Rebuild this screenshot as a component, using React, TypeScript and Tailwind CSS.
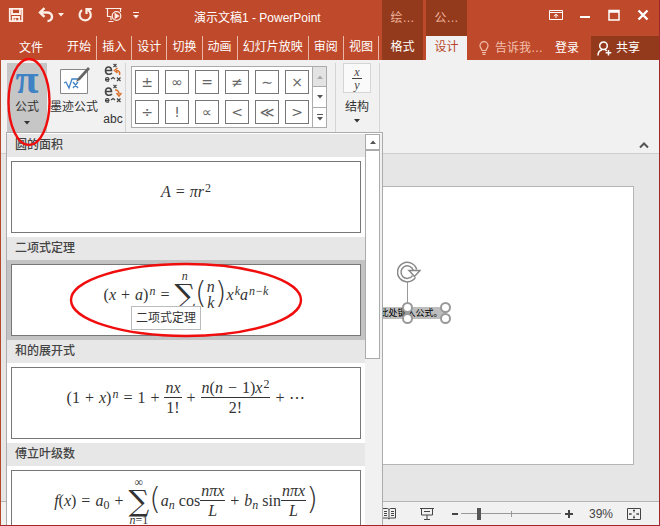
import type { ReactNode } from 'react'
import { clsx } from 'clsx'

const tabs = ['开始', '插入', '设计', '切换', '动画', '幻灯片放映', '审阅', '视图']
const symbols = ['±', '∞', '=', '≠', '∼', '×', '÷', '!', '∝', '<', '≪', '>']

function Caret({ className }: { className?: string }) {
  return (
    <svg viewBox="0 0 6 4" className={clsx('h-1 w-1.5', className)} fill="currentColor">
      <path d="M0 0h6L3 3.5z" />
    </svg>
  )
}

function QuickAccess() {
  return (
    <div className="flex items-center pb-1.5 pl-2 text-[#fdeee8]">
      <button aria-label="保存">
        <svg width="16" height="16" viewBox="0 0 16 16" fill="none" stroke="currentColor" strokeWidth="1.8">
          <path d="M1.8 1.8h12.4v12.4H1.8zM4 2v5h8V2M4.8 14v-4h6.4v4M7.3 11.5V14" />
        </svg>
      </button>
      <button aria-label="撤消" className="ml-3.5">
        <svg width="16" height="16" viewBox="0 0 16 16" fill="none" stroke="currentColor" strokeWidth="2.4">
          <path d="M6.5 1.2 2 5.5l4.5 4.3M2.5 5.5H9c3 0 5 1.6 5 4.2S12 14 9.5 14" />
        </svg>
      </button>
      <Caret className="ml-1" />
      <button aria-label="恢复" className="ml-3.5">
        <svg width="15" height="16" viewBox="0 0 15 16" fill="none" stroke="currentColor" strokeWidth="2.2">
          <path d="M4 3.2A5.6 5.6 0 1 0 10 3M8.5 7V2h5.3" />
        </svg>
      </button>
      <button aria-label="从头开始" className="ml-3">
        <svg width="18" height="16" viewBox="0 0 18 16" fill="none" stroke="currentColor" strokeWidth="1.2">
          <path d="M.5 1.5h16M2.5 2v7.5h4M6 10v3M3.5 14.5h5M15.5 2v3" />
          <circle cx="11.5" cy="9" r="4.3" />
          <path d="M10.2 6.8v4.4l3.4-2.2z" fill="currentColor" />
        </svg>
      </button>
      <button aria-label="自定义快速访问工具栏" className="ml-2.5 flex flex-col items-center gap-0.5">
        <span className="h-px w-1.5 bg-current" />
        <Caret />
      </button>
    </div>
  )
}

function ContextTab({ group, label, active }: { group: string; label: string; active?: boolean }) {
  return (
    <div className="ml-[3px] flex w-[41px] shrink-0 flex-col bg-[#933a1d]">
      <div className="flex h-9 items-center justify-center text-[#f0b49c]">{group}</div>
      <button className={clsx('h-6 pb-0.5', active ? 'bg-[#f1f1f1] text-[#b7472a]' : 'text-white')}>{label}</button>
    </div>
  )
}

function TitleBar() {
  return (
    <header className="flex h-[60px] shrink-0 bg-[#bf4a2b] text-white">
      <div className="flex w-[379px] shrink-0 flex-col">
        <div className="flex h-9">
          <QuickAccess />
          <h1 className="ml-[55px] pt-2.5 leading-4">演示文稿1 - PowerPoint</h1>
        </div>
        <nav className="flex h-6 items-center">
          <button className="w-[62px]">文件</button>
          {tabs.map((tab) => (
            <button key={tab} className="h-6 flex-auto border-r border-[#eab7a6] pb-0.5">
              {tab}
            </button>
          ))}
        </nav>
      </div>
      <ContextTab group="绘…" label="格式" />
      <ContextTab group="公…" label="设计" active />
      <div className="flex min-w-0 flex-1 flex-col">
        <div className="flex h-9 items-center justify-end gap-[17px] pr-2.5 pb-1.5">
          <button aria-label="功能区显示选项">
            <svg width="14" height="12" viewBox="0 0 14 12" fill="none" stroke="currentColor">
              <path d="M.5 1.5h13v9H.5zM.5 3.5h13M7 9V5.5M4.8 7.3 7 5.2l2.2 2.1" />
            </svg>
          </button>
          <button aria-label="最小化">
            <svg width="11" height="12" viewBox="0 0 11 12" fill="currentColor">
              <path d="M0 7h10v2H0z" />
            </svg>
          </button>
          <button aria-label="最大化">
            <svg width="12" height="12" viewBox="0 0 12 12" fill="none" stroke="currentColor">
              <path d="M1 1.5h10v9.5H1zM1 3h10" strokeWidth="1.5" />
            </svg>
          </button>
          <button aria-label="关闭">
            <svg width="12" height="12" viewBox="0 0 12 12" fill="none" stroke="currentColor" strokeWidth="2.4">
              <path d="m1.5 1.5 9 9M10.5 1.5l-9 9" />
            </svg>
          </button>
        </div>
        <div className="flex h-6 items-center">
          <button className="ml-3 flex items-center gap-1.5 text-[#f2c0ae]">
            <svg width="10" height="14" viewBox="0 0 10 14" fill="none" stroke="currentColor" strokeWidth="1.2">
              <path d="M3 9.5C3 8 1 7 1 4.7a4 4 0 0 1 8 0C9 7 7 8 7 9.5zM3 11.5h4M3.5 13.3h3" />
            </svg>
            告诉我…
          </button>
          <button className="ml-auto">登录</button>
          <button className="ml-3 flex h-6 w-[68px] items-center gap-1 bg-[#933a1d] pl-1.5">
            <svg width="15" height="15" viewBox="0 0 15 15" fill="none" stroke="currentColor" strokeWidth="1.5">
              <circle cx="6.5" cy="4.8" r="3.8" />
              <path d="M1 14.5c0-3.5 1.5-5 4-5.8M8.2 8.6l1.5 1.2M11.5 9v5.5M8.7 11.8h5.6" />
            </svg>
            共享
          </button>
        </div>
      </div>
    </header>
  )
}

function Conversion({ label, up }: { label: string; up?: boolean }) {
  return (
    <button aria-label={label}>
      <svg width="18" height="19" viewBox="0 0 18 19" fill="none" stroke="#444" strokeWidth="1.2">
        <path d="M1 7.5h6.500C7.500 3 1.500 2.500 1.500 7.500c0 4.500 4.500 4.500 6.500 2.500" strokeWidth="1.6" />
        <path d="m9.500 1 3 3m0-3-3 3M1.500 16.500H5c0-2.500-3.500-2.500-3.500 0 0 2 2.500 2 3.500 1M7 16l2-1.500L11 16M13 14.500l3.500 3.500m0-3.500L13 18" />
        <path
          d={up ? 'M15.5 12c1-3-1-4.5-3.5-4.5M13.5 5l-3 2.5 3 2.5' : 'M11 6c2.5 0 4 1 4 4M12.5 9l2.5 3 2.5-3'}
          stroke="#d9702e"
          strokeWidth="1.5"
        />
      </svg>
    </button>
  )
}

function Ribbon() {
  return (
    <section className="flex h-[94px] shrink-0 items-start border-b border-[#cfcfcf] bg-[#f1f1f1] pt-[3px] pl-1.5">
      <button className="relative flex h-[72px] w-10 flex-col items-center bg-[#c6c6c6]">
        <span className="h-9 font-['Liberation_Serif',serif] text-[42px] leading-8 font-bold text-[#3f83c4]">π</span>
        <span className="leading-4">公式</span>
        <Caret className="mt-1.5" />
        <svg className="absolute -top-1 left-0 z-20 h-[88px] w-11 overflow-visible" viewBox="0 0 44 88" fill="none">
          <ellipse cx="22" cy="43" rx="20.5" ry="43" stroke="#f00d0d" strokeWidth="2.4" />
        </svg>
      </button>
      <button className="ml-0.5 flex w-[50px] flex-col items-center whitespace-nowrap">
        <svg width="32" height="36" viewBox="0 0 32 36" fill="none">
          <path d="M2.5 6.5h27v24h-27z" fill="#fff" stroke="#888" />
          <path d="m6 20 2-1 3 6 3-9h8M15 19l5 6m0-6-5 6" stroke="#3f83c4" strokeWidth="1.3" />
          <path d="M20 15 30 4l2 2-10 11-4 2z" fill="#666" />
        </svg>
        <span className="leading-4">墨迹公式</span>
      </button>
      <div className="ml-0.5 flex w-6 flex-col items-center gap-0.5">
        <Conversion label="专业型" up />
        <Conversion label="线性" />
        <button className="pt-1.5">abc</button>
      </div>
      <div className="h-[69px] w-px bg-[#d5d5d5]" />
      <div className="mt-[3px] ml-[5px] flex h-[62px] border border-[#ababab] bg-white">
        <div className="grid grid-cols-6 gap-1.5 p-[3px]">
          {symbols.map((s) => (
            <button
              key={s}
              className="size-6 border border-[#777] font-['DejaVu_Sans',sans-serif] text-sm leading-5 text-[#666]"
            >
              {s}
            </button>
          ))}
        </div>
        <div className="flex w-3.5 flex-col divide-y divide-[#ababab] border-l border-[#ababab] text-[#555]">
          <button aria-label="上一行" className="flex flex-1 items-center justify-center bg-[#e3e3e3] text-[#aaa]">
            <Caret className="rotate-180" />
          </button>
          <button aria-label="下一行" className="flex flex-1 items-center justify-center">
            <Caret />
          </button>
          <button aria-label="其他" className="flex flex-1 flex-col items-center justify-center gap-0.5">
            <span className="h-px w-1.5 bg-current" />
            <Caret />
          </button>
        </div>
      </div>
      <div className="ml-2 h-[69px] w-px bg-[#d5d5d5]" />
      <button className="ml-1.5 flex w-[30px] flex-col items-center">
        <span className="mb-1.5 flex h-[30px] w-7 flex-col items-center border border-[#d5d5d5] bg-[#fafafa] pt-0.5 font-['Liberation_Serif',serif] text-xs leading-3 text-[#444] italic">
          <span className="border-b border-[#444] px-0.5">x</span>
          <span>y</span>
        </span>
        <span className="leading-4">结构</span>
        <Caret className="mt-1" />
      </button>
      <div className="ml-[7px] h-[69px] w-px bg-[#d5d5d5]" />
      <button aria-label="折叠功能区" className="mr-2.5 mb-1 ml-auto self-end text-[#555]">
        <svg width="10" height="7" viewBox="0 0 10 7" fill="none" stroke="currentColor" strokeWidth="2">
          <path d="m1 5.5 4-4 4 4" />
        </svg>
      </button>
    </section>
  )
}

/* Formula building blocks */

const V = ({ children }: { children: ReactNode }) => <i>{children}</i>

const Op = ({ children }: { children: ReactNode }) => <span className="px-[5px]">{children}</span>

const Sup = ({ children }: { children: ReactNode }) => (
  <span className="pb-2 pl-px text-xs leading-3">{children}</span>
)

const Sub = ({ children }: { children: ReactNode }) => (
  <span className="pt-2 text-xs leading-3">{children}</span>
)

function Frac({ top, bottom }: { top: ReactNode; bottom: ReactNode }) {
  return (
    <span className="flex flex-col items-center">
      <span className="flex h-[19px] items-center border-b border-[#333] px-px">{top}</span>
      <span className="flex h-[19px] items-center">{bottom}</span>
    </span>
  )
}

function Sum({ from, to }: { from?: ReactNode; to: ReactNode }) {
  return (
    <span className="flex flex-col items-center">
      <span className="h-2.5 text-xs leading-[10px]">{to}</span>
      <span className="h-7 font-['DejaVu_Serif',serif] text-[29px] leading-7">∑</span>
      <span className="h-2.5 text-xs leading-[10px]">{from}</span>
    </span>
  )
}

const Big = ({ children }: { children: ReactNode }) => (
  <span className="pb-1 font-['DejaVu_Sans',sans-serif] text-3xl font-extralight">{children}</span>
)

interface FormulaProps {
  title: string
  selected?: boolean
  children: ReactNode
}

function Formula({ title, selected, children }: FormulaProps) {
  return (
    <li>
      <h2 className="h-[23px] bg-[#e7e7e7] pl-2 leading-[22px] font-medium text-[#444]">{title}</h2>
      <div className={clsx('p-1', selected && 'bg-[#c3c3c3]')}>
        <div
          role="button"
          tabIndex={0}
          className="relative flex h-[72px] items-center justify-center border border-[#777] bg-white font-['Liberation_Serif',serif] text-base leading-4 whitespace-nowrap text-[#333]"
        >
          {children}
        </div>
      </div>
    </li>
  )
}

function FormulaMenu() {
  return (
    <div className="absolute top-[72px] bottom-0 left-[5px] z-10 flex w-[377px] overflow-hidden border border-b-0 border-[#ababab] bg-white pt-px">
      <ul className="flex-1">
        <Formula title="圆的面积">
          <span className="mb-2.5 flex items-center">
            <V>A</V>
            <Op>=</Op>
            <V>πr</V>
            <Sup>2</Sup>
          </span>
        </Formula>
        <Formula title="二项式定理" selected>
          <span className="mb-2.5 flex items-center">
            (<V>x</V>
            <Op>+</Op>
            <V>a</V>)
            <Sup>
              <V>n</V>
            </Sup>
            <Op>=</Op>
            <Sum to={<V>n</V>} />
            <Big>(</Big>
            <span className="flex flex-col items-center">
              <V>n</V>
              <V>k</V>
            </span>
            <Big>)</Big>
            <V>x</V>
            <Sup>
              <V>k</V>
            </Sup>
            <V>a</V>
            <Sup>
              <V>n−k</V>
            </Sup>
          </span>
          <svg className="absolute -top-1 left-[57px] h-20 w-60 overflow-visible" viewBox="0 0 240 80" fill="none">
            <ellipse cx="117" cy="39" rx="115" ry="36" stroke="#f00d0d" strokeWidth="2.4" />
          </svg>
          <span
            role="tooltip"
            className="absolute top-[41px] left-[119px] border border-[#bbb] bg-white px-1 font-['Liberation_Sans','Noto_Sans_CJK_SC',sans-serif] text-xs leading-[22px]"
          >
            二项式定理
          </span>
        </Formula>
        <Formula title="和的展开式">
          <span className="mb-2.5 flex items-center">
            (1<Op>+</Op>
            <V>x</V>)
            <Sup>
              <V>n</V>
            </Sup>
            <Op>=</Op>1<Op>+</Op>
            <Frac top={<V>nx</V>} bottom="1!" />
            <Op>+</Op>
            <Frac
              top={
                <>
                  <V>n</V>(<V>n</V>
                  <Op>−</Op>1)<V>x</V>
                  <Sup>2</Sup>
                </>
              }
              bottom="2!"
            />
            <Op>+</Op>⋯
          </span>
        </Formula>
        <Formula title="傅立叶级数">
          <span className="mb-2.5 flex items-center">
            <V>f</V>(<V>x</V>)<Op>=</Op>
            <V>a</V>
            <Sub>0</Sub>
            <Op>+</Op>
            <Sum
              to="∞"
              from={
                <>
                  <V>n</V>=1
                </>
              }
            />
            <Big>(</Big>
            <V>a</V>
            <Sub>
              <V>n</V>
            </Sub>
            <span className="pl-1">cos</span>
            <Frac top={<V>nπx</V>} bottom={<V>L</V>} />
            <Op>+</Op>
            <V>b</V>
            <Sub>
              <V>n</V>
            </Sub>
            <span className="pl-1">sin</span>
            <Frac top={<V>nπx</V>} bottom={<V>L</V>} />
            <Big>)</Big>
          </span>
        </Formula>
      </ul>
      <div className="flex w-[17px] flex-col bg-[#f1f1f1] pr-0.5">
        <button aria-label="向上滚动" className="flex h-4 items-center justify-center border border-[#ababab] bg-white text-[#555]">
          <Caret className="rotate-180" />
        </button>
        <div className="h-[209px] border border-[#ababab] bg-white" />
      </div>
    </div>
  )
}

const Handle = ({ className }: { className: string }) => (
  <span className={clsx('absolute size-[11px] rounded-full border-2 border-[#999] bg-white', className)} />
)

function SlideArea() {
  return (
    <main className="flex min-h-0 flex-1 bg-[#e6e6e6] pt-8 pr-[25px] pb-9 pl-[178px]">
      <div className="relative flex-1 border border-[#b5b5b5] bg-white">
        <div className="absolute top-[120px] left-1/2 h-3 w-[78px] -translate-x-1/2 bg-[#bdbdbd]">
          <p className="text-center text-[9px] leading-3 whitespace-nowrap text-black">在此处键入公式。</p>
          <span className="absolute bottom-full left-1/2 h-7 w-px bg-[#999]" />
          <svg className="absolute -top-[46px] left-[29px]" width="24" height="22" viewBox="0 0 24 22" fill="none">
            <path d="M17 15.5A8 8 0 1 1 18 9" stroke="#888" strokeWidth="5" />
            <path d="M17 15.5A8 8 0 1 1 18 9" stroke="#fff" strokeWidth="2" />
            <path d="M12 9.5h11l-5.5 6z" fill="#fff" stroke="#888" strokeWidth="1.5" />
          </svg>
          <Handle className="-top-[5px] left-[34px]" />
          <Handle className="-top-[5px] -right-[5px]" />
          <Handle className="-bottom-[5px] left-[34px]" />
          <Handle className="-right-[5px] -bottom-[5px]" />
        </div>
      </div>
    </main>
  )
}

function StatusBar() {
  return (
    <footer className="flex h-6 shrink-0 items-center justify-end border-t border-[#b5b5b5] bg-[#f1f1f1] pr-[18px] text-[#444]">
      <button aria-label="阅读视图">
        <svg width="14" height="13" viewBox="0 0 14 13" fill="none" stroke="currentColor">
          <path d="M.5 1.5h5l1.5 1 1.5-1h5v9.5h-5L7 12l-1.5-1h-5zM7 2.5V12M2 4.5h3M2 6.5h3M2 8.5h3M9 4.5h3M9 6.5h3M9 8.5h3" />
        </svg>
      </button>
      <button aria-label="幻灯片放映" className="ml-6">
        <svg width="14" height="13" viewBox="0 0 14 13" fill="none" stroke="currentColor">
          <path d="M0 1.5h14M1.5 1.5V8h11V1.5M4 4.5h6M7 8v4M4 12.5h6" />
        </svg>
      </button>
      <button aria-label="缩小" className="ml-4 flex h-4 w-2.5 items-center justify-center">
        <span className="h-0.5 w-1.5 bg-current" />
      </button>
      <div className="relative mr-1 ml-px flex w-[100px] items-center">
        <input
          type="range"
          aria-label="显示比例"
          min={0}
          max={100}
          defaultValue={17}
          className="h-3 w-full appearance-none bg-[linear-gradient(#999,#999)] bg-[length:100%_1px] bg-center bg-no-repeat [&::-webkit-slider-thumb]:h-3 [&::-webkit-slider-thumb]:w-1 [&::-webkit-slider-thumb]:appearance-none [&::-webkit-slider-thumb]:bg-[#555]"
        />
        <span className="absolute left-1/2 h-1.5 w-px bg-[#999]" />
      </div>
      <button aria-label="放大">
        <svg width="8" height="8" viewBox="0 0 8 8" stroke="currentColor" strokeWidth="2">
          <path d="M0 4h8M4 0v8" />
        </svg>
      </button>
      <span className="ml-4">39%</span>
      <button aria-label="适应窗口" className="ml-3.5">
        <svg width="14" height="14" viewBox="0 0 14 14" fill="none" stroke="currentColor">
          <path d="M.5 1.5h13v11H.5zM7 2.500v3M7 8.500v3M2 7h3M9 7h3M6 3.500h2M6 10.500h2M3 6v2M11 6v2" />
        </svg>
      </button>
    </footer>
  )
}

export default function App() {
  return (
    <div className="flex h-screen flex-col overflow-hidden border-r border-b border-[#a4262c] bg-[#f1f1f1] font-['Liberation_Sans','Noto_Sans_CJK_SC',sans-serif] text-xs text-[#333]">
      <TitleBar />
      <div className="relative flex min-h-0 flex-1 flex-col border-l border-[#b7472a]">
        <Ribbon />
        <SlideArea />
        <StatusBar />
        <FormulaMenu />
      </div>
    </div>
  )
}
